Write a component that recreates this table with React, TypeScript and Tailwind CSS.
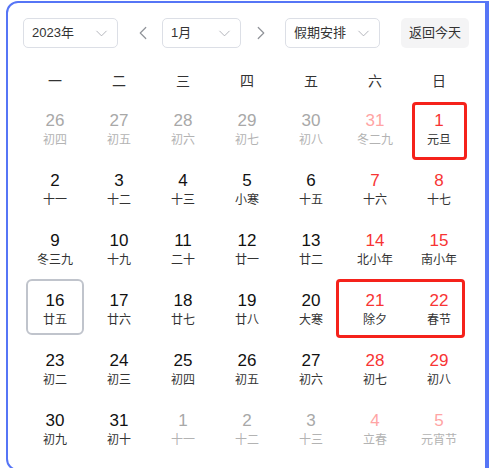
import { ChevronDown, ChevronLeft, ChevronRight } from "lucide-react";

type Day = {
  n: number;
  lunar: string;
  kind?: "gray" | "red" | "fade";
  mark?: "today" | "holiday" | "span";
};

const weekdays = ["一", "二", "三", "四", "五", "六", "日"];

const rows: Day[][] = [
  [
    { n: 26, lunar: "初四", kind: "gray" },
    { n: 27, lunar: "初五", kind: "gray" },
    { n: 28, lunar: "初六", kind: "gray" },
    { n: 29, lunar: "初七", kind: "gray" },
    { n: 30, lunar: "初八", kind: "gray" },
    { n: 31, lunar: "冬二九", kind: "fade" },
    { n: 1, lunar: "元旦", kind: "red", mark: "holiday" },
  ],
  [
    { n: 2, lunar: "十一" },
    { n: 3, lunar: "十二" },
    { n: 4, lunar: "十三" },
    { n: 5, lunar: "小寒" },
    { n: 6, lunar: "十五" },
    { n: 7, lunar: "十六", kind: "red" },
    { n: 8, lunar: "十七", kind: "red" },
  ],
  [
    { n: 9, lunar: "冬三九" },
    { n: 10, lunar: "十九" },
    { n: 11, lunar: "二十" },
    { n: 12, lunar: "廿一" },
    { n: 13, lunar: "廿二" },
    { n: 14, lunar: "北小年", kind: "red" },
    { n: 15, lunar: "南小年", kind: "red" },
  ],
  [
    { n: 16, lunar: "廿五", mark: "today" },
    { n: 17, lunar: "廿六" },
    { n: 18, lunar: "廿七" },
    { n: 19, lunar: "廿八" },
    { n: 20, lunar: "大寒" },
    { n: 21, lunar: "除夕", kind: "red", mark: "span" },
    { n: 22, lunar: "春节", kind: "red" },
  ],
  [
    { n: 23, lunar: "初二" },
    { n: 24, lunar: "初三" },
    { n: 25, lunar: "初四" },
    { n: 26, lunar: "初五" },
    { n: 27, lunar: "初六" },
    { n: 28, lunar: "初七", kind: "red" },
    { n: 29, lunar: "初八", kind: "red" },
  ],
  [
    { n: 30, lunar: "初九" },
    { n: 31, lunar: "初十" },
    { n: 1, lunar: "十一", kind: "gray" },
    { n: 2, lunar: "十二", kind: "gray" },
    { n: 3, lunar: "十三", kind: "gray" },
    { n: 4, lunar: "立春", kind: "fade" },
    { n: 5, lunar: "元宵节", kind: "fade" },
  ],
];

function numColor(kind?: Day["kind"]) {
  if (kind === "gray") return "text-[#a8a8a8]";
  if (kind === "fade") return "text-[#ffa4a4]";
  if (kind === "red") return "text-[#f73434]";
  return "text-[#111111]";
}

function lunarColor(kind?: Day["kind"]) {
  if (kind === "gray" || kind === "fade") return "text-[#b3b3b3]";
  return "text-[#333333]";
}

function Select({ label, width }: { label: string; width: string }) {
  return (
    <div
      className={`${width} h-[30px] flex items-center justify-between pl-[8px] pr-[6px] border border-[#dcdfe6] rounded-[5px] bg-white text-[13px] text-[#333]`}
    >
      <span>{label}</span>
      <ChevronDown size={19} strokeWidth={1.1} className="text-[#a8abb2]" />
    </div>
  );
}

function Cell({ d }: { d: Day }) {
  return (
    <div className="relative h-[60px] flex flex-col items-center pt-[11px]">
      {d.mark === "today" && (
        <div className="absolute top-[-1px] left-[3px] w-[58px] h-[56px] border-2 border-[#c0c4cc] rounded-[6px]" />
      )}
      {d.mark === "holiday" && (
        <div className="absolute top-[2px] left-[5px] w-[55px] h-[58px] border-[3px] border-[#f5221b] rounded-[4px]" />
      )}
      {d.mark === "span" && (
        <div className="absolute top-[-1px] left-[-7px] w-[129px] h-[59px] border-[3px] border-[#f5221b] rounded-[4px]" />
      )}
      <span className={`text-[17px] leading-[20px] ${numColor(d.kind)}`}>{d.n}</span>
      <span className={`mt-[1px] text-[12px] leading-[16px] ${lunarColor(d.kind)}`}>{d.lunar}</span>
    </div>
  );
}

export default function App() {
  return (
    <div
      className="h-[468px] overflow-hidden bg-white pl-[6px] pt-[1px]"
      style={{ fontFamily: '"Liberation Sans", "Noto Sans CJK SC", sans-serif' }}
    >
      <div className="h-[470px] border-l-2 border-t-2 border-b-2 border-r-4 border-[#5675f6] rounded-l-[12px] pl-[15px] pt-[15px] bg-white">
        {/* toolbar */}
        <div className="flex items-center">
          <Select label="2023年" width="w-[95px]" />
          <ChevronLeft size={22} strokeWidth={1.3} className="ml-[14px] text-[#909399]" />
          <div className="ml-[8px]">
            <Select label="1月" width="w-[79px]" />
          </div>
          <ChevronRight size={22} strokeWidth={1.3} className="ml-[9px] text-[#909399]" />
          <div className="ml-[13px]">
            <Select label="假期安排" width="w-[95px]" />
          </div>
          <button className="ml-[21px] w-[68px] h-[30px] rounded-[5px] bg-[#f4f4f5] text-[13px] text-[#333]">
            返回今天
          </button>
        </div>

        {/* weekdays */}
        <div className="mt-[14px] w-[448px] h-[38px] grid grid-cols-7 items-center text-[14px] text-[#333]">
          {weekdays.map((w) => (
            <div key={w} className="text-center">
              {w}
            </div>
          ))}
        </div>

        {/* days */}
        <div className="w-[448px] grid grid-cols-7">
          {rows.flat().map((d, i) => (
            <Cell key={i} d={d} />
          ))}
        </div>
      </div>
    </div>
  );
}
